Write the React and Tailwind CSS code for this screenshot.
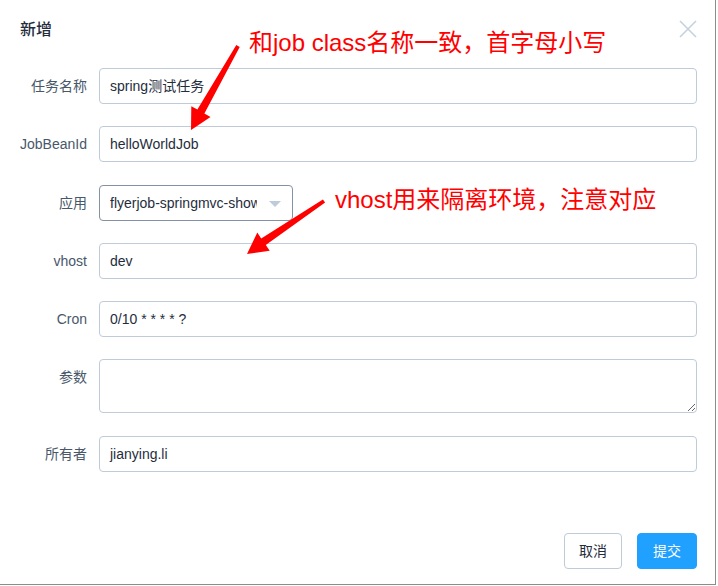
const FONT = { fontFamily: '"Liberation Sans", "Noto Sans CJK SC", sans-serif' };

function Row({ label, children }) {
  return (
    <div className="flex items-start mb-[22.3px]">
      <label className="w-[79px] pr-3 text-right text-sm leading-[36px] text-[#48576a] whitespace-nowrap">
        {label}
      </label>
      <div className="flex-1">{children}</div>
    </div>
  );
}

function Input({ value }) {
  return (
    <div className="h-9 w-full rounded border border-[#bfcbd9] px-[10px] text-sm leading-[34px] text-[#1f2d3d]">
      {value}
    </div>
  );
}

function Arrow({ points }) {
  return <polygon points={points} fill="#ff0000" />;
}

export default function App() {
  return (
    <div className="relative w-[718px] h-[586px] bg-white" style={FONT}>
      <div className="flex flex-col w-[716px] h-[585px] border-r border-b border-[#8c8c8c] bg-white">
        {/* header */}
        <div className="flex items-start justify-between pl-5 pr-[18px] pt-[22px]">
          <span className="text-base leading-4 font-medium text-[#1f2d3d]">新增</span>
          <svg width="18" height="18" viewBox="0 0 18 18" className="-mt-[2px]">
            <path d="M1 1 L17 17 M17 1 L1 17" stroke="#c6d1de" strokeWidth="1.6" />
          </svg>
        </div>

        {/* form */}
        <div className="pl-5 pr-[18px] pt-[30px]">
          <Row label="任务名称">
            <Input value="spring测试任务" />
          </Row>
          <Row label="JobBeanId">
            <Input value="helloWorldJob" />
          </Row>
          <Row label="应用">
            <div className="relative h-9 w-[194px] rounded border border-[#8391a5] pl-[10px] pr-[35px] text-sm leading-[34px] text-[#1f2d3d]">
              <span className="block overflow-hidden whitespace-nowrap">flyerjob-springmvc-showcase</span>
              <span className="absolute right-[11px] top-[15px] w-0 h-0 border-l-[6px] border-r-[6px] border-t-[6px] border-l-transparent border-r-transparent border-t-[#bfcbd9]" />
            </div>
          </Row>
          <Row label="vhost">
            <Input value="dev" />
          </Row>
          <Row label="Cron">
            <Input value="0/10 * * * * ?" />
          </Row>
          <Row label="参数">
            <textarea
              rows={2}
              className="block w-full h-[54px] rounded border border-[#bfcbd9] px-[7px] py-[5px] text-sm text-[#1f2d3d] resize-y outline-none"
              style={FONT}
            />
          </Row>
          <Row label="所有者">
            <Input value="jianying.li" />
          </Row>
        </div>

        {/* footer */}
        <div className="mt-auto flex justify-end gap-[15px] pr-[18px] pb-[15px]">
          <button className="h-9 w-[58px] rounded border border-[#bfcbd9] bg-white text-sm text-[#1f2d3d]">
            取消
          </button>
          <button className="h-9 w-[60px] rounded border border-[#20a0ff] bg-[#20a0ff] text-sm text-white">
            提交
          </button>
        </div>
      </div>

      {/* annotations */}
      <span className="absolute left-[249px] top-[28px] text-[24px] leading-[30px] text-[#ff0000] whitespace-nowrap">
        和job class名称一致，首字母小写
      </span>
      <span className="absolute left-[335px] top-[185px] text-[24px] leading-[30px] text-[#ff0000] whitespace-nowrap">
        vhost用来隔离环境，注意对应
      </span>
      <svg className="absolute left-0 top-0 pointer-events-none" width="718" height="586">
        <Arrow points="239.7,47 204.4,113.6 210.5,117 191,130 191.3,106.2 197.4,109.6 236.3,45" />
        <Arrow points="325.1,202.6 265.8,245 269.7,250.8 247,254 257.3,232.6 261.2,238.4 322.9,199.4" />
      </svg>
    </div>
  );
}
